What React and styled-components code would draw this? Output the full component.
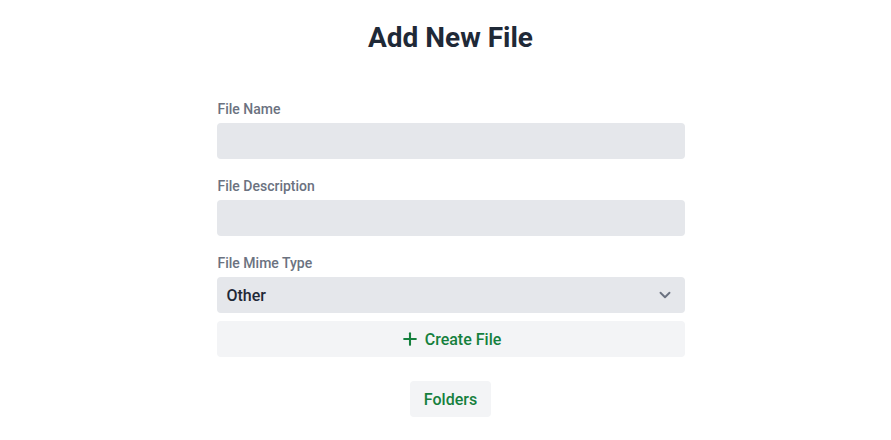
import React from 'react';
import styled, { createGlobalStyle } from 'styled-components';
import { Plus, ChevronDown } from 'lucide-react';

const GlobalStyle = createGlobalStyle`
  body {
    margin: 0;
    background: #fff;
    font-family: Roboto, "Liberation Sans", sans-serif;
  }
`;

const Page = styled.div`
  display: flex;
  flex-direction: column;
  align-items: center;
  padding: 20px 0 0 10px;
`;

const Title = styled.h1`
  margin: 0 0 43px;
  font-size: 28px;
  line-height: 36px;
  font-weight: 700;
  color: #1f2937;
`;

const Form = styled.form`
  width: 468px;
  display: flex;
  flex-direction: column;
`;

const Field = styled.div`
  display: flex;
  flex-direction: column;
  gap: 4px;
  margin-bottom: 17px;

  &:last-of-type {
    margin-bottom: 8px;
  }
`;

const Label = styled.label`
  font-size: 14px;
  line-height: 20px;
  font-weight: 500;
  color: #6b7280;
  padding-left: 1px;
`;

const Input = styled.input`
  box-sizing: border-box;
  height: 36px;
  width: 100%;
  border: none;
  border-radius: 4px;
  background: #e5e7eb;
  padding: 0 10px;
  font: inherit;
  font-size: 16px;
  outline: none;
`;

const SelectBox = styled.div`
  box-sizing: border-box;
  height: 36px;
  display: flex;
  align-items: center;
  justify-content: space-between;
  border-radius: 4px;
  background: #e5e7eb;
  padding: 0 11px 0 10px;
  font-size: 16px;
  font-weight: 500;
  color: #1f2937;

  svg {
    color: #6b7280;
  }
`;

const Button = styled.button`
  box-sizing: border-box;
  height: 36px;
  display: flex;
  align-items: center;
  justify-content: center;
  gap: ${p => (p.$wide ? '5px' : '0')};
  width: ${p => (p.$wide ? '100%' : 'auto')};
  padding: 0 14px;
  border: none;
  border-radius: 4px;
  background: #f3f4f6;
  color: #15803d;
  font-family: inherit;
  font-size: 16px;
  font-weight: 500;
  cursor: pointer;
`;

const Footer = styled.div`
  display: flex;
  justify-content: center;
  margin-top: 24px;
`;

export default function App() {
  return (
    <>
      <GlobalStyle />
      <Page>
        <Title>Add New File</Title>
        <Form onSubmit={e => e.preventDefault()}>
          <Field>
            <Label>File Name</Label>
            <Input />
          </Field>
          <Field>
            <Label>File Description</Label>
            <Input />
          </Field>
          <Field>
            <Label>File Mime Type</Label>
            <SelectBox>
              <span>Other</span>
              <ChevronDown size={18} strokeWidth={2.5} />
            </SelectBox>
          </Field>
          <Button $wide type="submit">
            <Plus size={20} strokeWidth={2.5} />
            Create File
          </Button>
        </Form>
        <Footer>
          <Button type="button">Folders</Button>
        </Footer>
      </Page>
    </>
  );
}
